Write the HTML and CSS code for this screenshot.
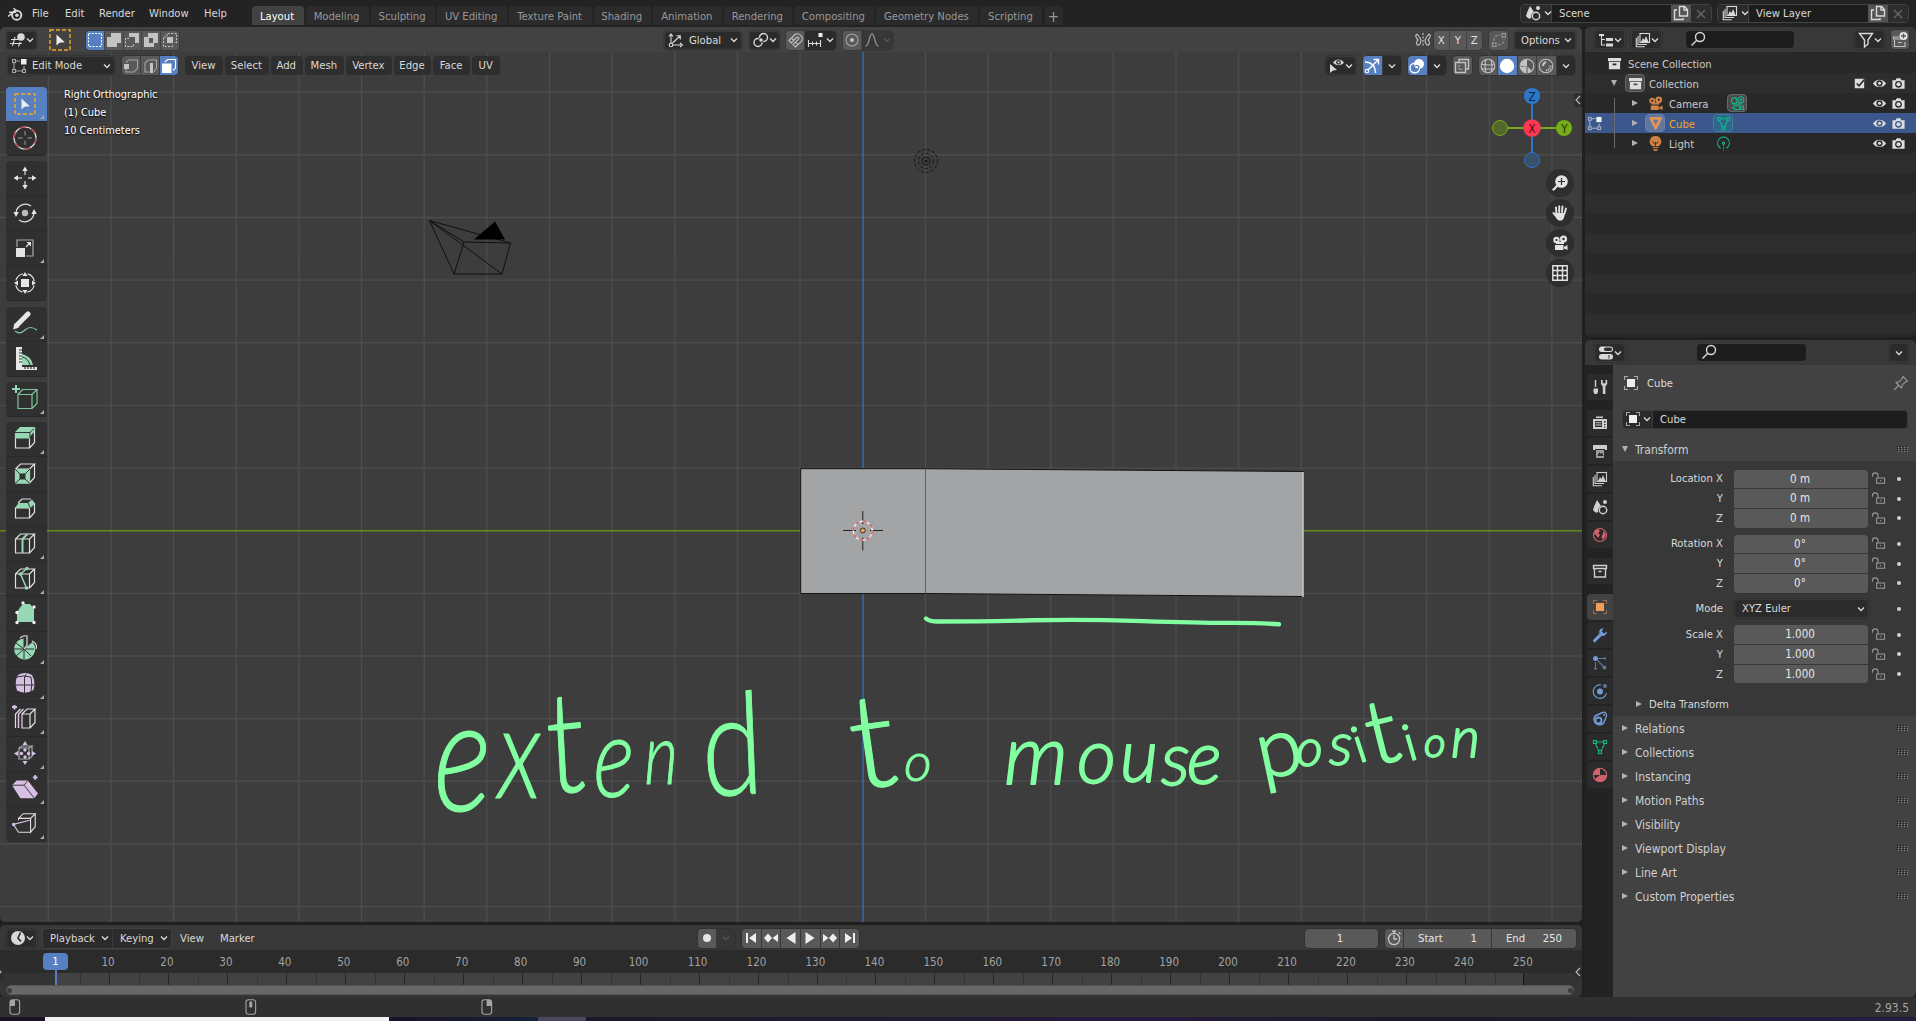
FILE: index.html
```html
<!DOCTYPE html>
<html lang="en">
<head>
<meta charset="utf-8">
<title>Blender</title>
<link rel="stylesheet" href="styles.css">
</head>
<body>
<svg class="sprite" aria-hidden="true">
  <symbol id="down" viewBox="0 0 8 16"><path d="M1 6.500 4 9.500 7 6.500" class="l w15"/></symbol>
  <symbol id="tri-d" viewBox="0 0 8 8"><path d="M1 1h6L4 7z" class="f"/></symbol>
  <symbol id="tri-r" viewBox="0 0 8 8"><path d="M1 1v6l6-3z" class="f"/></symbol>
  <symbol id="blender" viewBox="0 0 16 16"><path d="M1 10.500 8 4.600M2 6.200h7M6.500 2.200l4 3.200" class="l w15"/><circle cx="9.700" cy="9.200" r="4.600" class="l w2"/><circle cx="9.900" cy="9.200" r="1.800" class="f"/></symbol>
  <symbol id="view3d" viewBox="0 0 16 16"><path d="M5 5 2.500 14M10 10l-1.500 4.500M1 7.500h7M0 11.500h12" class="l"/><circle cx="11" cy="5" r="3.800" class="f"/></symbol>
  <symbol id="cursorbox" viewBox="0 0 22 22"><rect x="1" y="1" width="20" height="20" fill="none" stroke="#f5a623" stroke-width="1.400" stroke-dasharray="4 2"/><path d="M7.500 5.500v11l3-2.700 5.300-.6z" fill="#eee"/></symbol>
  <symbol id="sel-new" viewBox="0 0 16 16"><rect x="1.500" y="1.500" width="13" height="13" class="l" stroke-dasharray="2 1.300"/></symbol>
  <symbol id="sel-add" viewBox="0 0 16 16"><path d="M5 1h10v10h-4v4H1V5h4z" class="f"/></symbol>
  <symbol id="sel-sub" viewBox="0 0 16 16"><path d="M5 1h10v10h-4V5H5z" class="f"/><path d="M5 6.500H1.500v8h8V11" class="l" stroke-dasharray="2 1.300"/></symbol>
  <symbol id="sel-xor" viewBox="0 0 16 16"><path d="M5 1h10v10h-4v4H1V5h4zM6 6v5h4V6z" fill-rule="evenodd" class="f"/></symbol>
  <symbol id="sel-and" viewBox="0 0 16 16"><path d="M5 4V1.500h9.500v9H12M4 5H1.500v9.500h9V12" class="l" stroke-dasharray="2 1.300"/><rect x="5" y="5" width="6" height="6" class="f"/></symbol>
  <symbol id="editmode" viewBox="0 0 16 16"><path d="M3 5v6M5 3h4M5 13h6M13 8v3" class="l dim"/><rect x="1.500" y="1.500" width="3" height="3" class="l dim"/><rect x="1.500" y="11.500" width="3" height="3" class="l dim"/><rect x="11.500" y="11.500" width="3" height="3" class="l dim"/><rect x="10" y="1" width="5.500" height="5.500" class="f hi"/></symbol>
  <symbol id="vert" viewBox="0 0 16 16"><path d="M3 4.500 5.500 2h9v8L11 14H3V11" class="l dim"/><rect x="1" y="6" width="5" height="5" class="f"/></symbol>
  <symbol id="edge" viewBox="0 0 16 16"><path d="M7 14H3V5l3-3h8.500v8L12 14" class="l dim"/><rect x="8" y="5" width="3" height="10" class="f"/></symbol>
  <symbol id="face" viewBox="0 0 16 16"><path d="M4 4 6.500 1.500h8V10L12 12.500" class="l"/><rect x="1" y="5.500" width="9.500" height="9.500" class="f"/></symbol>
  <symbol id="orient" viewBox="0 0 16 16"><path d="M3 3v8M4 13h9M4.500 11 12 4M8.500 3.800H12.300V7.500M1 4.500 3 2l2 2.500M12 11l2.500 2L12 15" class="l"/><circle cx="3" cy="13" r="1.800" class="l"/></symbol>
  <symbol id="pivot" viewBox="0 0 16 16"><circle cx="5" cy="10.500" r="4" class="l w15"/><circle cx="10.500" cy="5.500" r="4" class="l w15"/><circle cx="8" cy="8" r="2.600" fill="#2b2b2b"/><circle cx="8" cy="8" r="1.700" class="f"/></symbol>
  <symbol id="magnet" viewBox="0 0 16 16"><path d="M2 8.500 7.500 3a4.700 4.700 0 0 1 6.600 6.600L8.500 15 6 12.600l5.600-5.500a1.300 1.300 0 0 0-1.800-1.800L4.300 10.900zM4.500 6l2.300 2.400M11 12.500 8.600 10.200" class="l"/></symbol>
  <symbol id="increment" viewBox="0 0 16 16"><path d="M1.500 8v7M1.500 11.500h12M5.500 9.500v4M9.500 9.500v4M13.500 8v7" class="l"/><rect x="11.500" y="1" width="4" height="4" class="f hi"/></symbol>
  <symbol id="prop" viewBox="0 0 16 16"><circle cx="8" cy="8" r="6" class="l dim"/><circle cx="8" cy="8" r="2" class="f"/></symbol>
  <symbol id="falloff" viewBox="0 0 16 16"><path d="M1.500 14C5.500 14 5 2 8 2s2.500 12 6.500 12" class="l w15"/></symbol>
  <symbol id="butterfly" viewBox="0 0 16 16"><path d="M6 8C4 4 2 1 1 3c-.8 2 1 4 2 5-1.500 1-2 4-.5 5C4.500 14 6 10.500 6 8zM10 8c2-4 4-7 5-5 .8 2-1 4-2 5 1.500 1 2 4 .5 5C11.500 14 10 10.500 10 8z" class="l"/><path d="M8 1v14" class="l" stroke-dasharray="2 1.500"/></symbol>
  <symbol id="automerge" viewBox="0 0 16 16"><rect x="11" y="1.500" width="3.500" height="3.500" class="l"/><rect x="1.500" y="11" width="3.500" height="3.500" class="l"/><path d="M3 9Q3 3 9 3M7 13q6 0 6-6" class="l" stroke-dasharray="2.500 2"/></symbol>
  <symbol id="eyecursor" viewBox="0 0 16 16"><path d="M4 4.500C7 .5 12 .5 15 4.500 12 8 7 8 4 4.500z" class="f"/><circle cx="9.500" cy="4.300" r="2.400" fill="#303030"/><circle cx="9.500" cy="4.300" r="1.100" class="f"/><path d="M1 6v9l3-2.500 4-.5z" class="f"/></symbol>
  <symbol id="gizmo" viewBox="0 0 16 16"><path d="M3.500 12.500 14 2M9.500 1.500h5v5M1 4q10 0 10.500 11" class="l w15"/><circle cx="3" cy="13" r="1.800" class="l"/></symbol>
  <symbol id="overlay" viewBox="0 0 16 16"><circle cx="5.800" cy="10" r="4.800" class="l w15"/><circle cx="10" cy="6" r="5" class="f"/><path d="M6 8q2.500-1.500 4 .8-.3 2-1.500 2.500" stroke="#5680c2" stroke-width="1.200" fill="none"/></symbol>
  <symbol id="xray" viewBox="0 0 16 16"><path d="M5 4V1.500h9.500v9.500H12M1.500 4.500h10v10h-10z" class="l w15"/><path d="M5 7v4.500h4" class="l" stroke-dasharray="1.500 1.200"/></symbol>
  <symbol id="wire" viewBox="0 0 16 16"><circle cx="8" cy="8" r="6.800" class="l"/><path d="M1 6q7 2 14 0M2 11h12M6 1.500q-2 6 0 13M11 2q2 6 0 12" class="l"/></symbol>
  <symbol id="solid" viewBox="0 0 16 16"><circle cx="8" cy="8" r="7.200" class="f"/></symbol>
  <symbol id="matprev" viewBox="0 0 16 16"><circle cx="8" cy="8" r="6.800" class="l"/><path d="M8 1v7l5 5A7 7 0 0 1 1.500 9L8 8z" class="f"/><path d="M8 1v7H1.500A7 7 0 0 1 8 1z" class="f"/><path d="M8 8v7" stroke="#555"/></symbol>
  <symbol id="rendered" viewBox="0 0 16 16"><circle cx="8" cy="8" r="6.800" class="l"/><path d="M5 8q0-3 3-4" class="l w2"/><path d="M8 12.500Q12 12 13 7" class="l w2" stroke-dasharray="1.200 .8"/></symbol>
  <symbol id="scene" viewBox="0 0 16 16"><path d="M5 1Q2 7 1 11q3 4 5 2 0-5 3-6z" class="f"/><circle cx="13" cy="3" r="2" class="f"/><circle cx="11" cy="11" r="3.700" class="l w15"/></symbol>
  <symbol id="layers" viewBox="0 0 16 16"><rect x="5" y="1.500" width="9.500" height="9" class="l"/><path d="M3 4v8.500h9M1.300 6v8.700h8.500" class="l"/><path d="M6 10l2-4 1.500 2L11 4l2.500 6z" class="f"/></symbol>
  <symbol id="copy" viewBox="0 0 16 16"><path d="M6.500 1.500h5l3 3V11h-8zM11 1.500V5h3.500M4 5H1.500v9.500H10V13" class="l w15"/></symbol>
  <symbol id="x" viewBox="0 0 16 16"><path d="M4 4l8 8M12 4l-8 8" class="l w15"/></symbol>
  <symbol id="tree" viewBox="0 0 16 16"><path d="M1 2h5v2H1zM8 6h7v3H8zM8 11.500h7v3H8z" class="f"/><path d="M3.500 4v9H7M3.500 7.500H7" class="l"/></symbol>
  <symbol id="search" viewBox="0 0 16 16"><circle cx="10" cy="6" r="4.500" class="l w15"/><path d="M6.800 9.200 1.500 14.500" class="l w15"/></symbol>
  <symbol id="filter" viewBox="0 0 16 16"><path d="M1.500 1.500h13L10 8v4l-3.500 3V8z" class="l w15"/></symbol>
  <symbol id="newcol" viewBox="0 0 16 16"><path d="M1 5h6M1.500 5v2H14M2.500 8v6.500H13V10M6 10.500h3.500" class="l"/><circle cx="11.500" cy="4" r="4" fill="#e6e6e6"/><path d="M9 4h5M11.500 1.500v5" stroke="#555" stroke-width="1.300"/></symbol>
  <symbol id="box" viewBox="0 0 16 16"><path d="M1 2h14v3.500H1zM2 6.500h12V14H2zM6 8v1.800h4V8z" fill-rule="evenodd" class="f"/></symbol>
  <symbol id="boxline" viewBox="0 0 16 16"><path d="M1.500 2.500h13v3h-13zM2.500 5.500v8.500h11V5.500M6.500 8.500h3" class="l w15"/></symbol>
  <symbol id="movie" viewBox="0 0 16 16"><circle cx="4.500" cy="5" r="3.200" class="f"/><circle cx="11.500" cy="4" r="3.600" class="f"/><path d="M4 7h8v2H4zM3 10h8.500v5H3zM12 12l3.500-2v5L12 13.500z" class="f"/><circle cx="4.500" cy="5" r="1.100" class="hole"/><circle cx="11.500" cy="4" r="1.200" class="hole"/></symbol>
  <symbol id="movieline" viewBox="0 0 16 16"><circle cx="4.500" cy="5" r="3" class="l"/><circle cx="11.500" cy="4" r="3.200" class="l"/><circle cx="11.500" cy="4" r=".8" class="l"/><path d="M2 8.500h11M4.500 10.500h6v4h-6zM1.500 12.500h3M11 12l3.500-1.500v4L11 13.500" class="l"/></symbol>
  <symbol id="meshobj" viewBox="0 0 16 16"><path d="M3 2.500h10.500L8.200 13z" fill="none" stroke="#e2935a" stroke-width="3" stroke-linejoin="round"/></symbol>
  <symbol id="meshdata" viewBox="0 0 16 16"><path d="M4.500 3h7M3.500 5l3.500 7M12.500 5 9 12" class="l"/><rect x="1.500" y="1.500" width="3" height="3" class="l"/><rect x="11.500" y="1.500" width="3" height="3" class="l"/><rect x="6.500" y="11.500" width="3" height="3" class="l"/></symbol>
  <symbol id="bulb" viewBox="0 0 16 16"><path d="M8 0a6 6 0 0 1 3.500 11h-7A6 6 0 0 1 8 0zM5 12h6v1H5zM5.500 14h5l-1 2h-3z" class="f"/><path d="M5 6l1.500 2 1.500-1.500L9.500 8 11 6M8 7v4" stroke="#333" fill="none"/></symbol>
  <symbol id="lightdata" viewBox="0 0 16 16"><path d="M5 13A6.300 6.300 0 1 1 11 13" class="l"/><circle cx="8" cy="7.500" r="1.200" class="l"/><path d="M8 9v7" class="l" stroke-dasharray="2 1.200"/></symbol>
  <symbol id="check" viewBox="0 0 16 16"><path d="M3 3h10v10H3z" class="f"/><path d="M5 8l2.500 2.500L13 4" stroke="#2b2b2b" stroke-width="1.800" fill="none"/></symbol>
  <symbol id="eye" viewBox="0 0 16 16"><path d="M1 8C4 2.500 12 2.500 15 8 12 13 4 13 1 8z" class="f"/><circle cx="8" cy="7.800" r="3.300" class="hole"/><circle cx="8" cy="7.800" r="1.600" class="f"/></symbol>
  <symbol id="photo" viewBox="0 0 16 16"><path d="M1.500 4.500h3.500l1-2h4l1 2h3.500v9h-13z" class="f"/><circle cx="8" cy="8.800" r="3.600" class="hole"/><circle cx="8" cy="8.800" r="2.200" class="f"/></symbol>
  <symbol id="props" viewBox="0 0 16 16"><rect x="1" y="1.500" width="14" height="5.500" rx="2.700" class="f"/><rect x="1" y="9" width="14" height="5.500" rx="2.700" class="f"/><rect x="6" y="2.500" width="8" height="3.500" rx="1.700" fill="#303030"/><path d="M11 10v3.500" stroke="#303030"/></symbol>
  <symbol id="tools" viewBox="0 0 16 16"><path d="M3.500 1v7" class="l w15"/><path d="M1.500 9.500h4.500v3.500l-1 2H2.500l-1-2z" class="f"/><path d="M9 1v4l1.800 2.500V15h2.600V7.500L15.200 5V1h-1.700v3.200h-2.800V1z" class="f"/></symbol>
  <symbol id="render" viewBox="0 0 16 16"><path d="M1 4h14v10H1zM4 1.500h7V3H4z" class="f"/><path d="M3 6h7v6H3zM12 6h1.500v1.500H12zM12 9h1.500v1H12zM12 11.500h1.500v1H12z" fill="#2b2b2b"/><path d="M3.500 7.800h6M3.500 10h6" class="l"/></symbol>
  <symbol id="output" viewBox="0 0 16 16"><path d="M1 2h14v5h-2V6H3v1H1z" class="f"/><path d="M4 7h8v8H4z" class="f dimf"/><path d="M5.500 13l2-4 1 2 1.500-1.500 1.500 3.500z" fill="#2b2b2b"/></symbol>
  <symbol id="world" viewBox="0 0 16 16"><circle cx="8" cy="8" r="6.500" class="l"/><path d="M2.500 4 6 2l2 2-2 2 2 2-2 3-2-3-2-1zM11 4l3 3-1 3-2.500 3-1-4 1.500-2z" class="f"/></symbol>
  <symbol id="object" viewBox="0 0 16 16"><path d="M1.500 5V1.500H5M11 1.500h3.500V5M14.500 11v3.500H11M5 14.500H1.500V11" class="l dim"/><rect x="4" y="4" width="8" height="8" class="f hi"/></symbol>
  <symbol id="wrench" viewBox="0 0 16 16"><path d="M15 4.500 12 6.500 9.800 4.500 11.500 1.200C8 1 6.500 4 7.500 6.500L1.500 12.500a1.500 1.500 0 0 0 2.200 2.200L9.500 9C12.500 9.500 15 7.500 15 4.500z" class="f"/></symbol>
  <symbol id="particles" viewBox="0 0 16 16"><circle cx="3.500" cy="3.500" r="2.500" class="f"/><circle cx="12.500" cy="12.500" r="1.900" class="f dimf"/><path d="M6 3.500h8M3.500 7v8M5.500 5.500l6 6M13 2v3M2 13.500h3" class="l dim"/></symbol>
  <symbol id="physics" viewBox="0 0 16 16"><circle cx="8" cy="8.500" r="3" class="f"/><path d="M9 2A6.700 6.700 0 1 0 14.500 10" class="l"/><circle cx="13" cy="3" r="2" class="f dimf"/></symbol>
  <symbol id="constraint" viewBox="0 0 16 16"><circle cx="6.500" cy="9.500" r="3" class="l w2"/><path d="M3 5 10.500 1.500A3 3 0 0 1 14.500 5L12 11.500A5.500 5.500 0 1 1 3 5z" class="l w15"/><circle cx="12" cy="4" r="1" class="f"/></symbol>
  <symbol id="material" viewBox="0 0 16 16"><circle cx="8" cy="8" r="6.700" class="l"/><path d="M8 8V1.500A6.500 6.500 0 0 0 1.500 8zM8 8v6.500A6.500 6.500 0 0 1 3 12zM8 8h6.500a6 6 0 0 1-6.500 6.500z" class="f"/></symbol>
  <symbol id="pin" viewBox="0 0 16 16"><path d="M10 1.500 14.500 6 12.500 7 9.500 9.500 8.500 13 3 7.500 6.500 6.500 9 3.500zM5.500 10.500 1 15" class="l"/></symbol>
  <symbol id="lock" viewBox="0 0 16 16"><path d="M1.500 6V5a3 3 0 0 1 6 0v2.500M6 7.500h8.500V13H6zM10.300 9.500v1.500" class="l"/></symbol>
  <symbol id="grip" viewBox="0 0 12 6"><path d="M0 .5h12M0 2.500h12M0 4.500h12" stroke="#1f1f1f" stroke-dasharray="1 2"/><path d="M1 1.500h11M1 3.500h11M1 5.500h11" stroke="#8a8a8a" stroke-dasharray="1 2"/></symbol>
  <symbol id="clock" viewBox="0 0 16 16"><circle cx="8" cy="8" r="7" class="f"/><path d="M10.500 2.500 8 8l3 3.500" stroke="#303030" stroke-width="1.700" fill="none"/></symbol>
  <symbol id="watch" viewBox="0 0 16 16"><circle cx="8" cy="9" r="5.600" class="l w15"/><path d="M8 5v4h3M6 1.200h4M8 1v2M13 2.500l1.500 1.500" class="l w15"/></symbol>
  <symbol id="first" viewBox="0 0 16 16"><path d="M3 3h2v10H3zM13 3v10L6 8z" class="f"/></symbol>
  <symbol id="prevkey" viewBox="0 0 16 16"><path d="M1 8l4-4.500L9 8l-4 4.500zM15 4v8L9.500 8z" class="f"/></symbol>
  <symbol id="playrev" viewBox="0 0 16 16"><path d="M12.500 2v12L3.500 8z" class="f"/></symbol>
  <symbol id="play" viewBox="0 0 16 16"><path d="M3.500 2v12l9-6z" class="f"/></symbol>
  <symbol id="nextkey" viewBox="0 0 16 16"><path d="M15 8l-4-4.500L7 8l4 4.500zM1 4v8l5.500-4z" class="f"/></symbol>
  <symbol id="last" viewBox="0 0 16 16"><path d="M11 3h2v10h-2zM3 3v10l7-5z" class="f"/></symbol>
  <symbol id="mouse-l" viewBox="0 0 12 16"><rect x="1" y=".8" width="9.600" height="14.400" rx="2.500" class="l"/><path d="M1 7V3q0-2 2-2h3v6z" class="f"/></symbol>
  <symbol id="mouse-m" viewBox="0 0 12 16"><rect x="1" y=".8" width="9.600" height="14.400" rx="2.500" class="l"/><rect x="4.300" y="2.500" width="3" height="6" rx="1" class="f"/></symbol>
  <symbol id="mouse-r" viewBox="0 0 12 16"><rect x="1" y=".8" width="9.600" height="14.400" rx="2.500" class="l"/><path d="M10.600 7V3q0-2-2-2h-3v6z" class="f"/></symbol>
  <symbol id="zoomin" viewBox="0 0 16 16"><circle cx="9.500" cy="6.500" r="6.300" class="f"/><path d="M5.500 10.500.8 15.200" stroke="currentColor" stroke-width="2.200"/><path d="M9.500 3v7M6 6.500h7" stroke="#303030" stroke-width="1.200"/></symbol>
  <symbol id="hand" viewBox="0 0 16 16"><path d="M4.500 8.500 4 2.500M7.200 7V1.200M10 7l.5-5.500M12.500 8.500l1.500-5M1.500 8l3.500 4" fill="none" stroke="currentColor" stroke-width="1.900" stroke-linecap="round"/><path d="M3.500 8h9.500l-1 5-2 2.500H6.500L4 13z" class="f"/></symbol>
  <symbol id="gridi" viewBox="0 0 16 16"><path d="M.8.8h14.400v14.400H.8zM5.500.8v14.400M10.500.8v14.400M.8 5.500h14.400M.8 10.500h14.400" class="l w15"/></symbol>

  <symbol id="t-cursor" viewBox="0 0 26 26"><circle cx="13" cy="13" r="11" class="tl"/><circle cx="13" cy="13" r="11" fill="none" stroke="#b8484c" stroke-width="1.500" stroke-dasharray="5.760"/><path d="M13 6v4.500M13 15.500V20M6 13h4.500M15.500 13H20" stroke="#999"/></symbol>
  <symbol id="t-move" viewBox="0 0 26 26"><path d="M13 1.500l2.700 4.500h-5.400zM13 24.500 10.300 20h5.400zM1.500 13 6 10.300v5.400zM24.500 13 20 15.700v-5.400z" fill="#e6e6e6"/><path d="M13 6v4M13 16v4M6 13h4M16 13h4" stroke="#bbb" stroke-width="1.500"/></symbol>
  <symbol id="t-rotate" viewBox="0 0 26 26"><path d="M4 13a9.500 9.500 0 0 1 15-7M22 13a9.500 9.500 0 0 1-15 7" class="tl"/><circle cx="13" cy="13" r="3.200" fill="#bbb"/><path d="M1.500 12h5.300L4 17zM19.500 14h5.300L22 9z" fill="#e6e6e6"/></symbol>
  <symbol id="t-scale" viewBox="0 0 26 26"><path d="M5 12V5h16v16h-7" class="tl dim"/><path d="M4 13h9v9H4z" fill="#e6e6e6"/><path d="M14 12l4-4" class="tl"/><path d="M14.500 7H19v4.500z" fill="#e6e6e6"/></symbol>
  <symbol id="t-transform" viewBox="0 0 26 26"><circle cx="13" cy="13" r="9.500" class="tl" stroke-dasharray="10 4.920" stroke-dashoffset="-2.500"/><path d="M9 9h8v8H9zM13 2l2.500 4h-5zM13 24l-2.500-4h5zM2 13l4-2.500v5zM24 13l-4 2.500v-5z" fill="#e6e6e6"/></symbol>
  <symbol id="t-annotate" viewBox="0 0 26 26"><path d="M3 20q5 4 10-1t12 0" class="tg"/><path d="M4.500 14.500 16 3" stroke="#e6e6e6" stroke-width="5" stroke-linecap="round"/><path d="M2.500 12.500 1 18.500l6-2z" fill="#e6e6e6"/></symbol>
  <symbol id="t-measure" viewBox="0 0 26 26"><path d="M10 8q9 2 11 11H10z" fill="#95d8b3"/><path d="M10 11q6 1 8 8" stroke="#333" fill="none"/><path d="M4 1h6v20h15v3H4z" fill="#e6e6e6"/><path d="M7 4h3M7 7h3M7 10h3M7 13h3M7 16h3M13 21v2M16 21v2M19 21v2M22 21v2" stroke="#333" stroke-width="1.200"/></symbol>
  <symbol id="t-add" viewBox="0 0 26 26"><path d="M6 10.500h14v14H6zM6 10.500l4.500-5h14.500l-5 5M25 5.500v14l-5 5" class="tg"/><path d="M4 1v8M0 5h8" stroke="#95d8b3" stroke-width="2"/></symbol>
  <symbol id="cubebase" viewBox="0 0 26 26"><path d="M3.500 9h14v14h-14zM3.500 9l5-5h14l-5 5M22.500 4v13.500l-5 5.500" class="tl"/></symbol>
  <symbol id="t-extrude" viewBox="0 0 26 26"><use href="#cubebase"/><path d="M3 7l5-5h15v4l-5 5.500v2H3z" fill="#95d8b3"/><path d="M3 7.500h15l4-4M18 7.500v6" stroke="#333" fill="none"/></symbol>
  <symbol id="t-inset" viewBox="0 0 26 26"><use href="#cubebase"/><path d="M3 9h15v14.500H3zM8 14v5h5v-5z" fill="#95d8b3" fill-rule="evenodd"/><path d="M3 9l5 5h5l5-5M3 23.500l5-4.500h5l5 4.500M8 14v5M13 14v5" stroke="#333" fill="none"/></symbol>
  <symbol id="t-bevel" viewBox="0 0 26 26"><path d="M3.500 13h14v10h-14zM6 8l4-4h9M22.500 8v9.500l-5 5.500" class="tl"/><path d="M3 13l3.500-5H16l4-3.500 3 4-4.500 4.500z" fill="#95d8b3"/><path d="M16 8l2.500 5" stroke="#333"/></symbol>
  <symbol id="t-loop" viewBox="0 0 26 26"><use href="#cubebase"/><path d="M10.500 23V9l5-5" stroke="#95d8b3" stroke-width="2" fill="none"/></symbol>
  <symbol id="t-knife" viewBox="0 0 26 26"><use href="#cubebase"/><path d="M15 3.500 8.500 9 14.500 23" stroke="#95d8b3" stroke-width="1.500" fill="none"/><circle cx="15" cy="3.500" r="1.800" fill="#95d8b3"/><circle cx="8.500" cy="9" r="1.800" fill="#95d8b3"/><circle cx="14.500" cy="23" r="1.800" fill="#95d8b3"/></symbol>
  <symbol id="t-poly" viewBox="0 0 26 26"><path d="M5 13q3-7 7-9h6l4 5v13H5z" fill="#95d8b3"/><g fill="#eee"><circle cx="11" cy="3" r="1.700"/><circle cx="22" cy="7" r="1.700"/><circle cx="5" cy="12.500" r="1.700"/><circle cx="5" cy="22.500" r="1.700"/><circle cx="22" cy="22.500" r="1.700"/></g></symbol>
  <symbol id="t-spin" viewBox="0 0 26 26"><path d="M12 14V3.500a10.500 10.500 0 1 0 8.500 3.500z" fill="#95d8b3"/><path d="M12 14V4M12 14 4 8M12 14H2M12 14l-8 7M12 14v10M12 14l7 7M12 14h10" stroke="#333"/><path d="M8 3q3-3 7-2v9l-3 4M20 6q6 3 4 8" class="tl"/></symbol>
  <symbol id="t-smooth" viewBox="0 0 26 26"><path d="M6 5q7-4 14 0 4 7 1.500 15Q13 25 5 20.500 2 12 6 5z" fill="#d7c0e3"/><path d="M4 15h18M12.500 7v16M5 7q6-2 14 0 1.500 7 0 15M12.500 7l2-3" stroke="#333" fill="none"/></symbol>
  <symbol id="t-slide" viewBox="0 0 26 26"><path d="M3.500 23V9l5-5M10 9h8v14h-8zM10 9l5-5h8l-5 5M23 4v13.500L18 23" class="tl"/><path d="M6.500 23V9l5-5" stroke="#d7c0e3" stroke-width="1.500" fill="none"/><path d="M2.500-.5v5M0 2h5" stroke="#d7c0e3" stroke-width="2"/></symbol>
  <symbol id="t-shrink" viewBox="0 0 26 26"><path d="M7 8h10v11H7zM7 8l3-2h10l-3 2M20 6v10.500L17 19" class="tl dim"/><g fill="#d7c0e3"><path d="M13 1l2.500 4h-5zM13 25l-2.500-4h5zM2 13.500 6 11v5zM24 13.500 20 16v-5z"/><circle cx="13" cy="10" r="1.700"/><circle cx="13" cy="17" r="1.700"/><circle cx="9.500" cy="13.500" r="1.700"/><circle cx="16.500" cy="13.500" r="1.700"/></g></symbol>
  <symbol id="t-shear" viewBox="0 0 28 26"><path d="M0 10l5-5h12l11 14-4 5H9z" fill="#d7c0e3"/><path d="M0 10h13l4-5M13 10l11 14" stroke="#333" fill="none"/><path d="M25-1v5M22.500 1.500h5" stroke="#d7c0e3" stroke-width="2"/></symbol>
  <symbol id="t-rip" viewBox="0 0 28 26"><path d="M7 10V8l5-5h13l-5 5H7M25 3v14l-5 6V8M20 23H7" class="tl"/><path d="M19 10 1.500 14.500 7 23" stroke="#d7c0e3" stroke-width="1.300" fill="none"/><circle cx="1.800" cy="14.500" r="1.900" fill="#d7c0e3"/></symbol>
</svg>

<div class="app">
  <header class="topbar">
    <svg class="i logo"><use href="#blender"/></svg>
    <nav class="menus"><a class="m-file">File</a><a class="m-edit">Edit</a><a class="m-render">Render</a><a class="m-window">Window</a><a>Help</a></nav>
    <nav class="tabs">
      <a class="on" style="width:52px">Layout</a><a style="width:63px">Modeling</a><a style="width:64px">Sculpting</a><a style="width:70px">UV Editing</a><a style="width:83px">Texture Paint</a><a style="width:57px">Shading</a><a style="width:69px">Animation</a><a style="width:68px">Rendering</a><a style="width:80px">Compositing</a><a style="width:102px">Geometry Nodes</a><a style="width:62px">Scripting</a><a class="plus" style="width:18px">+</a>
    </nav>
    <div class="idblock first"><span class="idtype"><svg class="i"><use href="#scene"/></svg><svg class="dn"><use href="#down"/></svg></span><span class="idname">Scene</span><span class="idbtn"><svg class="i"><use href="#copy"/></svg></span><span class="idx"><svg class="i"><use href="#x"/></svg></span></div>
    <div class="idblock"><span class="idtype"><svg class="i"><use href="#layers"/></svg><svg class="dn"><use href="#down"/></svg></span><span class="idname">View Layer</span><span class="idbtn"><svg class="i"><use href="#copy"/></svg></span><span class="idx"><svg class="i"><use href="#x"/></svg></span></div>
  </header>

  <main class="work">
    <div class="left">
      <section class="view3d">
        <div class="toolsettings">
          <span class="dd w30"><svg class="i"><use href="#view3d"/></svg><svg class="dn"><use href="#down"/></svg></span>
          <svg class="toolico"><use href="#cursorbox"/></svg>
          <span class="seg selmodes"><b class="on"><svg class="i"><use href="#sel-new"/></svg></b><b><svg class="i"><use href="#sel-add"/></svg></b><b><svg class="i"><use href="#sel-sub"/></svg></b><b><svg class="i"><use href="#sel-xor"/></svg></b><b><svg class="i"><use href="#sel-and"/></svg></b></span>
          <span class="dd orient"><svg class="i"><use href="#orient"/></svg><em>Global</em><svg class="dn"><use href="#down"/></svg></span>
          <span class="dd w30 pivot"><svg class="i"><use href="#pivot"/></svg><svg class="dn"><use href="#down"/></svg></span>
          <span class="seg snap"><b><svg class="i"><use href="#magnet"/></svg></b><b class="dk"><svg class="i"><use href="#increment"/></svg><svg class="dn"><use href="#down"/></svg></b></span>
          <span class="seg propedit"><b><svg class="i"><use href="#prop"/></svg></b><b class="dk off"><svg class="i"><use href="#falloff"/></svg><svg class="dn faint"><use href="#down"/></svg></b></span>
          <svg class="i butterfly"><use href="#butterfly"/></svg>
          <span class="seg xyz"><b>X</b><b>Y</b><b>Z</b></span>
          <span class="seg automerge"><b><svg class="i"><use href="#automerge"/></svg></b></span>
          <span class="dd options"><em>Options</em><svg class="dn"><use href="#down"/></svg></span>
        </div>
        <div class="canvas">
          <svg class="scene" viewBox="0 52 1582 870">
            <path id="grid" fill="none" stroke="#4c4c4c" stroke-width="1.400" d="M48.300 52v870M111 52v870M173.600 52v870M236.300 52v870M298.900 52v870M361.600 52v870M424.200 52v870M486.900 52v870M549.500 52v870M612.200 52v870M674.800 52v870M737.500 52v870M800.100 52v870M925.400 52v870M988 52v870M1050.700 52v870M1113.300 52v870M1176 52v870M1238.600 52v870M1301.300 52v870M1363.900 52v870M1426.600 52v870M1489.300 52v870M1551.900 52v870M0 92.200h1582M0 154.800h1582M0 217.500h1582M0 280.100h1582M0 342.800h1582M0 405.400h1582M0 468.100h1582M0 593.400h1582M0 656h1582M0 718.700h1582M0 781.300h1582M0 844h1582M0 906.600h1582"/>
            <path d="M0 530.700h1582" stroke="#618b1c" stroke-width="1.400"/>
            <path d="M863 52v870" stroke="#3a6ea8" stroke-width="1.400"/>
            <path d="M800.700 468.700H925.300L1303 471.500V596.500L925.300 593.500H800.700z" fill="#a3a4a6" stroke="#141414"/>
            <path d="M925.500 469V593.500" stroke="#606163"/><path d="M1303 472V597" stroke="#fff" stroke-width="1.200"/>
            <circle cx="925.500" cy="530.500" r="1" fill="#777"/>
            <path d="M843 530.500h13M870 530.500h13M862.800 511v13M862.800 537.500v13" stroke="#222"/>
            <circle cx="862.800" cy="530.700" r="9.500" fill="none" stroke="#f2e8e8" stroke-width="1.400"/><circle cx="862.800" cy="530.700" r="9.500" fill="none" stroke="#d6565c" stroke-width="1.400" stroke-dasharray="3.730"/>
            <circle cx="862.800" cy="530.500" r="2.500" fill="#eaa245" stroke="#333"/>
            <path d="M429.500 220.500 464 242l46.500 1L502 274h-48l10-32M429.500 220.500 454 274M429.500 220.500 510.500 243M429.500 220.500 502 274" fill="none" stroke="#111"/>
            <path d="M474 239.500 495 221.500l10 18z" fill="#000"/>
            <g fill="none" stroke="#151515"><circle cx="926" cy="161" r="11.500" stroke-dasharray="3 2"/><circle cx="926" cy="161" r="7.500" stroke-dasharray="3 2"/><circle cx="926" cy="161" r="4"/></g><circle cx="926" cy="161" r="1.500" fill="#151515"/>
            <path d="M926 618.500q3 3 12 3 45 0 95-1.200t110 .8 90 1.800q28 0 46 1.400" class="ink-line"/>
            <g class="ink">
              <text class="big" transform="scale(.78 1)"><tspan x="556" y="811" font-size="158">e</tspan><tspan x="638" y="798" font-size="128" >x</tspan><tspan x="704" y="794" rotate="-4" font-size="142" class="up">t</tspan><tspan x="761" y="797" font-size="112">e</tspan><tspan x="826" y="784" font-size="84">n</tspan><tspan x="902" y="797" rotate="-3" font-size="142" class="up">d</tspan></text>
              <text class="big"><tspan x="856" y="790" font-size="132" rotate="-8" class="up">t</tspan><tspan x="904" y="781" font-size="54">o</tspan></text>
              <text><tspan x="1004" y="784" font-size="82">m</tspan><tspan x="1077" y="783" font-size="76">o</tspan><tspan x="1120" y="782" font-size="74">u</tspan><tspan x="1161" y="785" font-size="74">s</tspan><tspan x="1187" y="784" font-size="74">e</tspan></text>
              <text><tspan x="1262" y="780" font-size="82" rotate="-12" class="up">p</tspan><tspan x="1296" y="766" font-size="52">o</tspan><tspan x="1329" y="765" font-size="60">s</tspan><tspan x="1359" y="763" font-size="50" rotate="-18" class="up">i</tspan><tspan x="1374" y="766" font-size="90" rotate="-14" class="up">t</tspan><tspan x="1409" y="761" font-size="50" rotate="-16" class="up">i</tspan><tspan x="1424" y="757" font-size="42">o</tspan><tspan x="1451" y="757" font-size="56">n</tspan></text>
            </g>
            <g text-anchor="middle" class="axis"><path d="M1508 128h56" stroke="#75ac17" stroke-width="2"/><path d="M1532 96v56" stroke="#2f77c9" stroke-width="2"/><circle cx="1532" cy="96" r="8" fill="#2f77c9"/><circle cx="1564" cy="128" r="8" fill="#75ac17"/><circle cx="1500" cy="128" r="7.500" fill="#51672c" stroke="#75ac17"/><circle cx="1532" cy="160" r="7.500" fill="#39506d" stroke="#2f77c9"/><circle cx="1532" cy="128" r="8.700" fill="#ff3752"/><text x="1532" y="100.500" fill="#0c2340">Z</text><text x="1532" y="132.500" fill="#4e0914">X</text><text x="1564.300" y="132.500" fill="#20330a">Y</text></g>
          </svg>
          <div class="hdr2">
            <span class="dd mode"><svg class="i"><use href="#editmode"/></svg><em>Edit Mode</em><svg class="dn"><use href="#down"/></svg></span>
            <span class="seg elem"><b><svg class="i"><use href="#vert"/></svg></b><b><svg class="i"><use href="#edge"/></svg></b><b class="on"><svg class="i"><use href="#face"/></svg></b></span>
            <nav class="vmenus"><a style="width:38px">View</a><a style="width:43.500px">Select</a><a style="width:32px">Add</a><a style="width:39px">Mesh</a><a style="width:46px">Vertex</a><a style="width:37px">Edge</a><a style="width:37px">Face</a><a style="width:28px">UV</a></nav>
            <span class="dd w30 vis"><svg class="i"><use href="#eyecursor"/></svg><svg class="dn"><use href="#down"/></svg></span>
            <span class="seg"><b class="on"><svg class="i"><use href="#gizmo"/></svg></b><b class="dk"><svg class="dn"><use href="#down"/></svg></b></span>
            <span class="seg"><b class="on"><svg class="i"><use href="#overlay"/></svg></b><b class="dk"><svg class="dn"><use href="#down"/></svg></b></span>
            <span class="seg"><b><svg class="i"><use href="#xray"/></svg></b></span>
            <span class="seg"><b><svg class="i"><use href="#wire"/></svg></b><b class="on"><svg class="i"><use href="#solid"/></svg></b><b><svg class="i"><use href="#matprev"/></svg></b><b><svg class="i"><use href="#rendered"/></svg></b><b class="dk"><svg class="dn"><use href="#down"/></svg></b></span>
          </div>
          <div class="vbody">
            <div class="toolbar">
              <div class="tg1"><b class="on more"><svg class="bs"><use href="#cursorbox"/></svg></b><b><svg><use href="#t-cursor"/></svg></b></div>
              <div><b><svg><use href="#t-move"/></svg></b><b><svg><use href="#t-rotate"/></svg></b><b class="more"><svg><use href="#t-scale"/></svg></b><b><svg><use href="#t-transform"/></svg></b></div>
              <div><b class="more"><svg><use href="#t-annotate"/></svg></b><b><svg><use href="#t-measure"/></svg></b></div>
              <div class="hi-ico"><b class="more"><svg><use href="#t-add"/></svg></b></div>
              <div class="hi-ico"><b class="more"><svg><use href="#t-extrude"/></svg></b><b><svg><use href="#t-inset"/></svg></b><b><svg><use href="#t-bevel"/></svg></b><b class="more"><svg><use href="#t-loop"/></svg></b><b class="more"><svg><use href="#t-knife"/></svg></b><b><svg><use href="#t-poly"/></svg></b><b class="more"><svg><use href="#t-spin"/></svg></b><b class="more"><svg><use href="#t-smooth"/></svg></b><b class="more"><svg><use href="#t-slide"/></svg></b><b class="more"><svg><use href="#t-shrink"/></svg></b><b class="more"><svg><use href="#t-shear"/></svg></b><b class="more"><svg><use href="#t-rip"/></svg></b></div>
            </div>
            <div class="info"><p>Right Orthographic</p><p>(1) Cube</p><p>10 Centimeters</p></div>
            <div class="nav"><b><svg class="i"><use href="#zoomin"/></svg></b><b><svg class="i"><use href="#hand"/></svg></b><b><svg class="i"><use href="#movie"/></svg></b><b><svg class="i"><use href="#gridi"/></svg></b></div>
          </div>
          <span class="tabhandle npanel"><svg viewBox="0 0 8 12"><path d="M6 2 2 6l4 4" class="l"/></svg></span>
        </div>
      </section>

      <section class="timeline">
        <div class="thead">
          <span class="dd w30"><svg class="i"><use href="#clock"/></svg><svg class="dn"><use href="#down"/></svg></span>
          <span class="seg tmenu"><b class="dk" style="width:69px"><em>Playback</em><svg class="dn"><use href="#down"/></svg></b><b class="dk" style="width:58px"><em>Keying</em><svg class="dn"><use href="#down"/></svg></b></span>
          <a class="tview">View</a><a class="tmarker">Marker</a>
          <span class="seg rec"><b><i class="dot"></i></b><b class="dk off"><svg class="dn faint"><use href="#down"/></svg></b></span>
          <span class="seg play"><b><svg class="i"><use href="#first"/></svg></b><b><svg class="i"><use href="#prevkey"/></svg></b><b><svg class="i"><use href="#playrev"/></svg></b><b><svg class="i"><use href="#play"/></svg></b><b><svg class="i"><use href="#nextkey"/></svg></b><b><svg class="i"><use href="#last"/></svg></b></span>
          <span class="seg frame"><b>1</b></span>
          <span class="seg range"><b><svg class="i"><use href="#watch"/></svg></b><b class="fld" style="width:87px"><em>Start</em><em>1</em></b><b class="fld" style="width:84px"><em>End</em><em>250</em></b></span>
        </div>
        <div class="ruler"><span>10</span><span>20</span><span>30</span><span>40</span><span>50</span><span>60</span><span>70</span><span>80</span><span>90</span><span>100</span><span>110</span><span>120</span><span>130</span><span>140</span><span>150</span><span>160</span><span>170</span><span>180</span><span>190</span><span>200</span><span>210</span><span>220</span><span>230</span><span>240</span><span>250</span></div>
        <div class="tracks"><div class="inrange"></div></div>
        <div class="scroll"><i></i><i></i></div>
        <div class="playhead"><b>1</b></div>
        <span class="tabhandle tl"><svg viewBox="0 0 8 12"><path d="M1 2l4 4-4 4" class="l"/></svg></span>
        <span class="tabhandle tr"><svg viewBox="0 0 8 12"><path d="M6 2 2 6l4 4" class="l"/></svg></span>
      </section>
    </div>

    <div class="right">
      <section class="outliner">
        <div class="ohead">
          <span class="dd w30"><svg class="i"><use href="#tree"/></svg><svg class="dn"><use href="#down"/></svg></span>
          <span class="dd w30 omode"><svg class="i"><use href="#layers"/></svg><svg class="dn"><use href="#down"/></svg></span>
          <span class="field osearch"><svg class="i"><use href="#search"/></svg></span>
          <span class="dd w30 ofilter"><svg class="i"><use href="#filter"/></svg><svg class="dn"><use href="#down"/></svg></span>
          <span class="seg newc"><b><svg class="i"><use href="#newcol"/></svg></b></span>
        </div>
        <div class="rows">
          <div class="row r0"><svg class="i"><use href="#box"/></svg><em>Scene Collection</em></div>
          <div class="row r1"><svg class="tri"><use href="#tri-d"/></svg><span class="chip"><svg class="i"><use href="#box"/></svg></span><em>Collection</em><span class="rr"><svg class="i"><use href="#check"/></svg><svg class="i"><use href="#eye"/></svg><svg class="i"><use href="#photo"/></svg></span></div>
          <div class="row r2"><svg class="tri"><use href="#tri-r"/></svg><span class="nochip or"><svg class="i"><use href="#movie"/></svg></span><em style="width:50px">Camera</em><span class="chip gr"><svg class="i"><use href="#movieline"/></svg></span><span class="rr"><svg class="i"><use href="#eye"/></svg><svg class="i"><use href="#photo"/></svg></span></div>
          <div class="row r2 sel"><svg class="i emode"><use href="#editmode"/></svg><svg class="tri"><use href="#tri-r"/></svg><span class="chip blue"><svg class="i"><use href="#meshobj"/></svg></span><em style="width:36px">Cube</em><span class="chip teal gr"><svg class="i"><use href="#meshdata"/></svg></span><span class="rr"><svg class="i"><use href="#eye"/></svg><svg class="i"><use href="#photo"/></svg></span></div>
          <div class="row r2"><svg class="tri"><use href="#tri-r"/></svg><span class="nochip or"><svg class="i"><use href="#bulb"/></svg></span><em style="width:36px">Light</em><span class="nochip gr"><svg class="i"><use href="#lightdata"/></svg></span><span class="rr"><svg class="i"><use href="#eye"/></svg><svg class="i"><use href="#photo"/></svg></span></div>
          <i class="vline"></i>
        </div>
      </section>

      <section class="properties">
        <div class="phead">
          <span class="dd w30"><svg class="i"><use href="#props"/></svg><svg class="dn"><use href="#down"/></svg></span>
          <span class="field psearch"><svg class="i"><use href="#search"/></svg></span>
          <span class="dd popt"><svg class="dn"><use href="#down"/></svg></span>
        </div>
        <div class="pbody">
          <nav class="ptabs">
            <b><svg class="i"><use href="#tools"/></svg></b>
            <b class="gap"><svg class="i"><use href="#render"/></svg></b><b><svg class="i"><use href="#output"/></svg></b><b><svg class="i"><use href="#layers"/></svg></b><b><svg class="i"><use href="#scene"/></svg></b><b class="red"><svg class="i"><use href="#world"/></svg></b>
            <b class="gap"><svg class="i"><use href="#boxline"/></svg></b>
            <b class="gap on"><svg class="i"><use href="#object"/></svg></b><b class="bl"><svg class="i"><use href="#wrench"/></svg></b><b class="bl"><svg class="i"><use href="#particles"/></svg></b><b class="bl"><svg class="i"><use href="#physics"/></svg></b><b class="bl"><svg class="i"><use href="#constraint"/></svg></b><b class="gr"><svg class="i"><use href="#meshdata"/></svg></b><b class="red"><svg class="i"><use href="#material"/></svg></b>
          </nav>
          <div class="pcontent">
            <div class="crumb"><svg class="i"><use href="#object"/></svg><em>Cube</em><svg class="i pin"><use href="#pin"/></svg></div>
            <div class="name"><span class="ntype"><svg class="i"><use href="#object"/></svg><svg class="dn"><use href="#down"/></svg></span><span class="nval">Cube</span></div>
            <div class="ptitle first"><svg class="tri"><use href="#tri-d"/></svg><em>Transform</em><svg class="grip"><use href="#grip"/></svg></div>
            <div class="tbody">
              <div class="vec"><div><label>Location X</label><b>0 m</b><svg class="i"><use href="#lock"/></svg><i class="dot"></i></div><div><label>Y</label><b>0 m</b><svg class="i"><use href="#lock"/></svg><i class="dot"></i></div><div><label>Z</label><b>0 m</b><svg class="i"><use href="#lock"/></svg><i class="dot"></i></div></div>
              <div class="vec"><div><label>Rotation X</label><b>0°</b><svg class="i"><use href="#lock"/></svg><i class="dot"></i></div><div><label>Y</label><b>0°</b><svg class="i"><use href="#lock"/></svg><i class="dot"></i></div><div><label>Z</label><b>0°</b><svg class="i"><use href="#lock"/></svg><i class="dot"></i></div></div>
              <div class="vec md"><div><label>Mode</label><span class="dd rotmode"><em>XYZ Euler</em><svg class="dn"><use href="#down"/></svg></span><i class="dot"></i></div></div>
              <div class="vec"><div><label>Scale X</label><b>1.000</b><svg class="i"><use href="#lock"/></svg><i class="dot"></i></div><div><label>Y</label><b>1.000</b><svg class="i"><use href="#lock"/></svg><i class="dot"></i></div><div><label>Z</label><b>1.000</b><svg class="i"><use href="#lock"/></svg><i class="dot"></i></div></div>
              <div class="delta"><svg class="tri"><use href="#tri-r"/></svg><em>Delta Transform</em></div>
            </div>
            <div class="ptitle"><svg class="tri"><use href="#tri-r"/></svg><em>Relations</em><svg class="grip"><use href="#grip"/></svg></div>
            <div class="ptitle"><svg class="tri"><use href="#tri-r"/></svg><em>Collections</em><svg class="grip"><use href="#grip"/></svg></div>
            <div class="ptitle"><svg class="tri"><use href="#tri-r"/></svg><em>Instancing</em><svg class="grip"><use href="#grip"/></svg></div>
            <div class="ptitle"><svg class="tri"><use href="#tri-r"/></svg><em>Motion Paths</em><svg class="grip"><use href="#grip"/></svg></div>
            <div class="ptitle"><svg class="tri"><use href="#tri-r"/></svg><em>Visibility</em><svg class="grip"><use href="#grip"/></svg></div>
            <div class="ptitle"><svg class="tri"><use href="#tri-r"/></svg><em>Viewport Display</em><svg class="grip"><use href="#grip"/></svg></div>
            <div class="ptitle"><svg class="tri"><use href="#tri-r"/></svg><em>Line Art</em><svg class="grip"><use href="#grip"/></svg></div>
            <div class="ptitle"><svg class="tri"><use href="#tri-r"/></svg><em>Custom Properties</em><svg class="grip"><use href="#grip"/></svg></div>
          </div>
        </div>
      </section>
    </div>
  </main>

  <footer class="status"><svg class="mouse"><use href="#mouse-l"/></svg><svg class="mouse"><use href="#mouse-m"/></svg><svg class="mouse"><use href="#mouse-r"/></svg><span class="ver">2.93.5</span></footer>
  <div class="desktop"><i></i></div>
</div>
</body>
</html>
```
FILE: styles.css
```css
* { box-sizing: border-box; }
body { margin: 0; background: #202020; color: #d9d9d9; font: 11.2px/14px "DejaVu Sans Condensed", "DejaVu Sans", sans-serif; font-stretch: condensed; overflow: hidden; }
em, i { font-style: normal; }
b { font-weight: normal; }
p { margin: 0; }
svg { display: block; flex: none; color: inherit; }
.sprite { position: absolute; width: 0; height: 0; }
.l { fill: none; stroke: currentColor; stroke-width: 1.1; }
.w15 { stroke-width: 1.4; }
.w2 { stroke-width: 1.9; }
.f { fill: currentColor; }
.hi { color: var(--hi, #eee); }
.dim { opacity: .7; }
.dimf { opacity: .7; }
.hole { fill: var(--hole, #2a2a2a); }
.tl { fill: none; stroke: #dedede; stroke-width: 1.2; }
.tg { fill: none; stroke: #7fc5a0; stroke-width: 1.2; }
.i { width: 16px; height: 16px; }
.dn { width: 8px; height: 16px; }
.dn.faint { color: #555; }

.app { width: 1916px; height: 1021px; display: flex; flex-direction: column; }

/* top bar */
.topbar { height: 27px; display: flex; align-items: flex-start; background: #232323; }
.logo { margin: 6px 0 0 7px; }
.menus { display: flex; margin: 6.5px 0 0 9px; width: 220px; }
.m-file { width: 33px; } .m-edit { width: 34px; } .m-render { width: 50px; } .m-window { width: 55px; }
.tabs { display: flex; gap: 2.05px; margin-top: 6px; }
.tabs a { height: 19px; padding: 3.5px 2px 0 0; text-align: center; color: #989898; background: #2b2b2b; border-radius: 4px 4px 0 0; white-space: nowrap; }
.tabs .on { background: #424242; color: #fff; }
.tabs .plus { font-size: 15px; padding-right: 0; }
.idblock { display: flex; width: 192px; height: 19px; margin: 3.5px 0 0 5px; border: 1px solid #424242; border-radius: 4px; background: #1d1d1d; overflow: hidden; }
.idblock.first { margin-left: auto; }
.idblock:last-child { margin-right: 7px; }
.idtype { width: 31px; display: flex; align-items: center; padding-left: 4px; gap: 3px; background: #2b2b2b; border-right: 1px solid #424242; }
.idname { flex: 1; padding: 2px 0 0 7px; }
.idbtn { width: 20px; background: #545454; padding: 0 2px; }
.idx { width: 20px; background: #2d2d2d; color: #686868; padding: 1px 2px; }

.work { flex: none; height: 970px; display: flex; gap: 3px; }
.left { width: 1582px; display: flex; flex-direction: column; gap: 3px; }
.right { width: 331px; display: flex; flex-direction: column; gap: 3px; }

/* shared widgets */
.dd, .seg { height: 19px; display: flex; align-items: center; border-radius: 4px; box-shadow: 0 0 0 1px #00000022; }
.dd { background: #2b2b2b; border: 1px solid #3b3b3b; padding: 0 3px; justify-content: space-between; }
.dd em, .seg em { padding-top: 1px; }
.dd.w30 { width: 31px; }
.seg { overflow: hidden; gap: 1px; }
.seg b { width: 18px; height: 19px; background: #595959; display: flex; align-items: center; justify-content: center; color: #c3c3c3; }
.seg b.on { background: #5680c2; color: #fff; }
.seg b.dk { background: #2b2b2b; color: #d9d9d9; }
.seg b.off { background: #373737; color: #8b8b8b; }
.field { background: #1d1d1d; border: 1px solid #3b3b3b; border-radius: 4px; height: 19px; }

/* 3D view */
.view3d { height: 895px; display: flex; flex-direction: column; overflow: hidden; border-radius: 5px; }
.toolsettings { height: 25px; background: #424242; display: flex; align-items: center; padding: 1px 6px 0; flex: none; }
.toolico { width: 22px; height: 22px; margin: 0 15px 0 12px; }
.selmodes b { width: 17.8px; }
.orient { width: 78px; margin-left: 485px; }
.orient em { width: 36px; }
.pivot { margin-left: 7px; }
.snap { margin-left: 6px; }
.snap .dk, .propedit .dk { width: 31px; gap: 3px; }
.propedit { margin-left: 7px; }
.butterfly { margin-left: auto; color: #c8c8c8; }
.xyz { margin-left: 3px; }
.xyz b { width: 15.5px; color: #e0e0e0; padding-top: 1px; }
.automerge { margin: 0 6px 0 7px; }
.automerge b { width: 19px; color: #999; }
.options { width: 62px; padding-left: 6px; }
.canvas { flex: 1; position: relative; background: #3d3d3d; }
.scene { position: absolute; inset: 0; width: 1582px; height: 870px; }
.ink { fill: #82ffa0; stroke: #82ffa0; stroke-width: 1.8; stroke-linejoin: round; font-family: Lato, sans-serif; font-weight: 300; font-style: italic; font-stretch: normal; }
.ink .big { stroke-width: 1; }
.ink .up { font-style: normal; }
.ink-line { fill: none; stroke: #82ffa0; stroke-width: 4.4; stroke-linecap: round; }
.hdr2 { position: relative; display: flex; gap: 7px; padding: 4px 7px 0; }
.hdr2 .seg b { width: 18.5px; }
.mode { width: 108px; }
.mode em { flex: 1; padding-left: 5px; }
.hdr2 .elem b { width: 18px; }
.vmenus { display: flex; gap: 2.1px; }
.vmenus a { height: 19px; padding: 3px 1px 0 0; text-align: center; background: rgba(40,40,40,.7); border-radius: 4px; }
.vis { margin-left: auto; }
.vbody { position: relative; display: flex; padding-top: 12px; }
.toolbar { width: 41px; margin-left: 6px; display: flex; flex-direction: column; gap: 5.3px; flex: none; }
.toolbar div { border-radius: 4px; overflow: hidden; background: #303030; }
.toolbar b { height: 35px; display: flex; align-items: center; justify-content: center; position: relative; padding-right: 3px; border-bottom: 1px solid #292929; }
.toolbar .hi-ico b { padding-bottom: 3px; }
.toolbar .tg1 b { height: 34.5px; }
.toolbar .on { background: #5680c2; }
.toolbar svg { width: 26px; height: 26px; overflow: visible; }
.toolbar .bs { width: 22px; height: 22px; }
.more::after { content: ""; position: absolute; right: 3px; bottom: 2px; border-left: 4px solid transparent; border-bottom: 4px solid #aaa; }
.info { margin: -1px 0 0 17px; color: #fff; font-size: 10.9px; line-height: 18px; text-shadow: 0 1px 2px #000; }
.nav { margin: 82px 8px 0 auto; display: flex; flex-direction: column; gap: 2px; }
.nav b { width: 28px; height: 28px; border-radius: 50%; background: #2e2e2e; display: flex; align-items: center; justify-content: center; color: #e3e3e3; }
.tabhandle { position: absolute; width: 8px; height: 14px; background: #2e2e2e; color: #bbb; }
.tabhandle svg { width: 8px; height: 14px; }
.npanel { right: 0; top: 41px; border-radius: 4px 0 0 4px; }
.axis { font-size: 11.5px; stroke-width: 1; }

/* timeline */
.timeline { height: 72px; position: relative; border-radius: 5px; overflow: hidden; background: #353535; }
.thead { height: 25px; display: flex; align-items: center; padding: 1px 6px 0; background: #383838; }
.tmenu { margin: 0 9px 0 6px; box-shadow: 0 0 0 1px #424242; }
.tmenu b.dk { justify-content: space-between; padding: 0 3px 0 7px; }
.thead a { padding-top: 1px; }
.tview { width: 40px; }
.tmarker { width: 60px; }
.rec { margin-left: 418px; }
.dot { width: 4px; height: 4px; border-radius: 50%; background: #d0d0d0; }
.rec .dot { width: 8px; height: 8px; background: #e6e6e6; }
.play { margin-left: 7px; }
.play b { width: 18.7px; color: #eee; }
.frame { margin-left: auto; }
.frame b { width: 73px; color: #e6e6e6; padding: 1px 3px 0 0; }
.range { margin-left: 7px; color: #e6e6e6; }
.seg b.fld { justify-content: space-between; padding: 0 14px; color: #e6e6e6; }
.ruler { height: 23px; background: #2b2b2b; display: flex; padding-left: 78.5px; color: #a3a3a3; font-size: 11.5px; line-height: 24px; }
.ruler span { width: 58.96px; text-align: center; flex: none; }
.tracks { height: 12px; background: #333; padding-left: 56px; }
.inrange { width: 1468px; height: 12px; border-right: 1px solid #111; background: repeating-linear-gradient(90deg, #262626 0 1px, transparent 1px 58.96px) 53px 0 no-repeat, repeating-linear-gradient(90deg, #363636 0 1px, transparent 1px 58.96px) 23.5px 0 no-repeat, #424242; }
.scroll { height: 10px; margin: 0 8px 0 6px; border-radius: 5px; background: #686868; border: 1.5px solid #545454; display: flex; align-items: center; justify-content: space-between; }
.scroll i { width: 5px; height: 5px; border-radius: 50%; background: #3c3c3c; }
.playhead { position: absolute; left: 43px; top: 28px; width: 25px; height: 32px; background: linear-gradient(#5680c2, #5680c2) 12px 0 / 2px 100% no-repeat; }
.playhead b { display: block; height: 17px; line-height: 18px; background: #5680c2; border-radius: 4px; text-align: center; color: #fff; }
.tabhandle.tl { left: -4px; top: 40px; }
.tabhandle.tr { right: 0; top: 40px; }

/* outliner */
.outliner { height: 310px; border-radius: 5px; overflow: hidden; }
.ohead, .phead { height: 25px; display: flex; align-items: center; background: #383838; padding: 0 7px 0 9px; }
.omode { margin-left: 6px; }
.osearch { width: 110px; margin-left: 23px; padding-left: 4px; }
.ofilter { margin-left: auto; }
.newc { margin-left: 6px; }
.rows { height: 285px; position: relative; background: repeating-linear-gradient(#282828 0 20px, #2d2d2d 20px 40px) 0 1px, #282828; padding-top: 1px; }
.row { height: 20px; display: flex; align-items: center; position: relative; }
.row em { padding-top: 3px; color: #c8c8c8; }
.row .i { width: 15px; height: 15px; color: #dcdcdc; }
.r0 { padding-left: 22px; gap: 6px; }
.r1 { padding-left: 25px; }
.r2 { padding-left: 46px; }
.tri { width: 8px; height: 8px; color: #b0b0b0; }
.chip, .nochip { width: 20px; height: 18px; margin: 0 4px 0 6px; display: flex; align-items: center; justify-content: center; border-radius: 4px; }
.r1 .chip { margin: 0 4px 0 7px; }
.chip { background: #4a4a4a; border: 1px solid #686868; }
.row em + .chip, .row em + .nochip { margin: 0 0 0 8px; }
.sel { background: #3b578c; --hole: #3b578c; }
.row.sel em { color: #f5a527; }
.chip.blue { background: #5f77a1; border-color: #687fa8; }
.chip.teal { background: #2c6887; border-color: #457c99; }
.row .or .i { color: #ce8248; }
.row .gr .i { color: #12b88d; }
.rr { margin-left: auto; display: flex; gap: 4.5px; padding-right: 10px; }
.emode { position: absolute; left: 2px; }
.vline { position: absolute; left: 29px; top: 46px; width: 1px; height: 50px; background: #6a6a6a; }

/* properties */
.properties { height: 657px; border-radius: 5px; overflow: hidden; }
.psearch { width: 111px; margin-left: 71px; padding-left: 4px; }
.popt { width: 20px; margin-left: auto; padding: 0 5px; }
.pbody { display: flex; height: 632px; }
.ptabs { width: 28px; background: #232323; padding: 9px 0 0 2px; display: flex; flex-direction: column; gap: 2px; }
.ptabs b { height: 26px; background: #2b2b2b; border-radius: 4px 0 0 4px; display: flex; align-items: center; justify-content: center; color: #cfcfcf; }
.ptabs .gap { margin-top: 8px; }
.ptabs b.on { background: #424242; color: #c58250; --hi: #f29c56; }
.ptabs .red { color: #cf626a; }
.ptabs .bl { color: #729ad6; }
.ptabs b.gr { color: #12b88d; }
.pcontent { width: 303px; background: #424242; }
.crumb { height: 36px; display: flex; align-items: center; padding: 0 7px 0 10px; gap: 8px; }
.crumb em { padding-top: 1px; }
.pin { margin-left: auto; color: #999; }
.name { height: 19px; margin: 8.5px 8px 0 9px; display: flex; border: 1px solid #393939; border-radius: 4px; overflow: hidden; }
.ntype { width: 29px; background: #2b2b2b; display: flex; align-items: center; gap: 2px; padding-left: 2px; }
.nval { flex: 1; background: #1d1d1d; padding: 2px 0 0 7px; border-left: 1px solid #3c3c3c; }
.ptitle { height: 24px; display: flex; align-items: center; font-size: 12px; padding: 2px 7px 0 8px; color: #cfcfcf; }
.ptitle em { margin-left: 6px; }
.ptitle .grip { margin-left: auto; width: 12px; height: 6px; margin-bottom: 2px; }
.ptitle.first { margin-top: 8.5px; }
.tbody { height: 255px; background: #383838; padding-top: 8px; }
.ptitle .tri, .delta .tri { margin-bottom: 2px; }
.vec { margin-bottom: 6px; }
.vec > div { display: flex; align-items: center; height: 19.7px; }
.vec label { width: 110px; text-align: right; margin-right: 11px; padding-top: 1px; }
.vec b { width: 134px; height: 18.7px; background: #595959; text-align: center; padding: 2px 2px 0 0; color: #e8e8e8; font-size: 11.5px; }
.vec div:first-child b { border-radius: 4px 4px 0 0; }
.vec div:last-child b { border-radius: 0 0 4px 4px; }
.vec .i { margin-left: 3px; color: #999; width: 15px; height: 15px; }
.vec .dot { margin-left: 11px; }
.rotmode { width: 135px; padding-left: 7px; height: 19px; }
.vec .rotmode + .dot { margin-left: 28px; }
.delta { display: flex; align-items: center; padding: 1px 0 0 22px; height: 30px; }
.delta em { margin-left: 6px; }

/* status bar */
.status { height: 20px; display: flex; align-items: center; background: #303030; padding: 0 7px 0 8.5px; color: #a5a5a5; }
.mouse { width: 12px; height: 16px; margin-right: 224px; }
.ver { margin-left: auto; font-size: 12px; padding-top: 1px; }
.desktop { height: 4px; padding-left: 45px; background: linear-gradient(90deg, #1a1127 0 20%, #16213a 28% 28%, #1a1a2a 28.1%, #4b4660 28.1% 30.6%, #1a1a2a 30.6%, #251a3c 60%, #191a28 75%, #251d42); }
.desktop i { display: block; width: 344px; height: 4px; background: #f4f1f4; }
```
